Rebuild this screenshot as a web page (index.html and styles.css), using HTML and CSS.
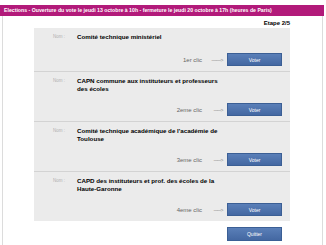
FILE: index.html
```html
<!DOCTYPE html>
<html lang="fr">
<head>
    <meta charset="UTF-8">
    <meta name="viewport" content="width=device-width, initial-scale=1.0">
    <title>Elections - Vote</title>
    <link rel="stylesheet" href="styles.css">
</head>
<body>
<div class="page">
    <div class="banner">Elections - Ouverture du vote le jeudi 13 octobre à 10h - fermeture le jeudi 20 octobre à 17h (heures de Paris)</div>
    <div class="content">
        <div class="column">
            <div class="step">Etape 2/5</div>
            <div class="ballots">
                <div class="ballot">
                    <div class="ballot-head">
                        <span class="label">Nom :</span>
                        <span class="title">Comité technique ministériel</span>
                    </div>
                    <div class="ballot-action">
                        <span class="hint">1er clic</span>
                        <span class="arrow">——&gt;</span>
                        <button class="btn">Voter</button>
                    </div>
                </div>
                <div class="ballot">
                    <div class="ballot-head">
                        <span class="label">Nom :</span>
                        <span class="title">CAPN commune aux instituteurs et professeurs des écoles</span>
                    </div>
                    <div class="ballot-action">
                        <span class="hint">2eme clic</span>
                        <span class="arrow">------&gt;</span>
                        <button class="btn">Voter</button>
                    </div>
                </div>
                <div class="ballot">
                    <div class="ballot-head">
                        <span class="label">Nom :</span>
                        <span class="title">Comité technique académique de l'académie de Toulouse</span>
                    </div>
                    <div class="ballot-action">
                        <span class="hint">3eme clic</span>
                        <span class="arrow">------&gt;</span>
                        <button class="btn">Voter</button>
                    </div>
                </div>
                <div class="ballot">
                    <div class="ballot-head">
                        <span class="label">Nom :</span>
                        <span class="title">CAPD des instituteurs et prof. des écoles de la Haute-Garonne</span>
                    </div>
                    <div class="ballot-action">
                        <span class="hint">4eme clic</span>
                        <span class="arrow">------&gt;</span>
                        <button class="btn">Voter</button>
                    </div>
                </div>
            </div>
            <div class="footer">
                <button class="btn">Quitter</button>
            </div>
        </div>
    </div>
</div>
</body>
</html>
```

FILE: styles.css
```css
body {
    margin: 0;
    font-family: 'Liberation Sans', Arial, sans-serif;
    background: #ffffff;
    color: #000;
}

.page {
    margin-top: 5px;
    width: 324px;
}

.banner {
    background-color: #b21a7a;
    color: #ffffff;
    font-size: 5.2px;
    font-weight: bold;
    height: 11px;
    line-height: 11px;
    padding-left: 4px;
    white-space: nowrap;
    overflow: hidden;
}

.content {
    margin: 0 1px 0 2px;
    border-left: 1px solid #dcdcdc;
    border-right: 1px solid #dcdcdc;
    height: 240px;
}

.column {
    width: 256px;
    margin-left: 31px;
}

.step {
    text-align: right;
    font-size: 6px;
    font-weight: bold;
    line-height: 8px;
    padding-top: 3px;
    margin-bottom: 1px;
}

.ballots {
    background-color: #ebebeb;
}

.ballot {
    padding: 5px 8px 5px 19px;
    border-bottom: 1px solid #d3d3d3;
}

.ballot:last-child {
    border-bottom: none;
}

.ballot-head {
    display: flex;
    min-height: 10px;
    line-height: 8px;
}

.label {
    width: 24px;
    flex-shrink: 0;
    font-size: 4.5px;
    color: #b0b0b0;
}

.title {
    font-size: 6.2px;
    font-weight: bold;
    width: 150px;
}

.ballot-action {
    display: flex;
    justify-content: flex-end;
    align-items: center;
    margin-top: 10px;
}

.hint {
    font-size: 6px;
    color: #666666;
}

.arrow {
    font-size: 5px;
    color: #888888;
    width: 17px;
    margin: 0 4px 0 4px;
    text-align: right;
    letter-spacing: -0.5px;
}

.btn {
    width: 55px;
    height: 13px;
    padding: 0;
    border: 1px solid #3b5f95;
    background: linear-gradient(to bottom, #5a7fb8, #4468a2);
    color: #ffffff;
    font-family: 'Liberation Sans', Arial, sans-serif;
    font-size: 5px;
    cursor: pointer;
}

.footer {
    display: flex;
    justify-content: flex-end;
    padding-right: 8px;
    margin-top: 6px;
}

.footer .btn {
    height: 14px;
}
```
